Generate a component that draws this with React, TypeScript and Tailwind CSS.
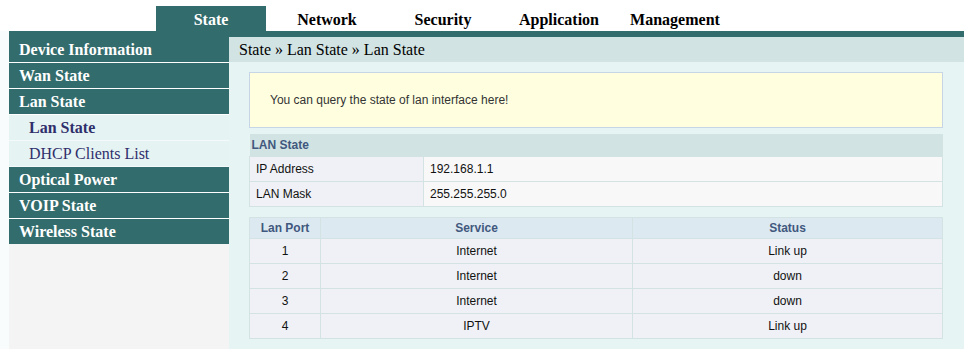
const tabs = ['State', 'Network', 'Security', 'Application', 'Management'];

const ports = [
  { port: '1', service: 'Internet', status: 'Link up' },
  { port: '2', service: 'Internet', status: 'down' },
  { port: '3', service: 'Internet', status: 'down' },
  { port: '4', service: 'IPTV', status: 'Link up' },
];

const SideMain = ({ label }: { label: string }) => (
  <div className="h-[26px] border-b border-white bg-[#336c6c] pl-[10px] text-[16px] font-bold leading-[25px] text-white">
    {label}
  </div>
);

const SideSub = ({ label, active }: { label: string; active?: boolean }) => (
  <div
    className={`h-[26px] border-b border-[#f4f9f9] bg-[#e6f3f3] pl-[20px] text-[16px] leading-[25px] text-[#2f2f6b] ${
      active ? 'font-bold' : ''
    }`}
  >
    {label}
  </div>
);

export default function App() {
  return (
    <div className="h-[349px] w-full overflow-hidden bg-[#f9fcfc] pl-[9px] font-['Liberation_Serif',serif]">
      {/* top menu */}
      <div className="flex h-[31px] gap-[6px] bg-white pl-[147px] pt-[6px] -ml-[9px] w-[calc(100%+9px)] box-border">
        <div className="ml-[9px] flex gap-[6px]">
          {tabs.map((t, i) => (
            <div
              key={t}
              className={`flex h-[25px] w-[110px] items-center justify-center pt-[2px] text-[16px] font-bold ${
                i === 0 ? 'bg-[#336c6c] text-white' : 'text-black'
              }`}
            >
              {t}
            </div>
          ))}
        </div>
      </div>
      <div className="h-[6px] bg-[#336c6c]" />

      <div className="flex h-[312px]">
        {/* sidebar */}
        <div className="w-[220px] bg-[#f5f4f4]">
          <SideMain label="Device Information" />
          <SideMain label="Wan State" />
          <SideMain label="Lan State" />
          <SideSub label="Lan State" active />
          <SideSub label="DHCP Clients List" />
          <SideMain label="Optical Power" />
          <SideMain label="VOIP State" />
          <div className="h-[25px] bg-[#336c6c] pl-[10px] text-[16px] font-bold leading-[25px] text-white">
            Wireless State
          </div>
        </div>

        {/* main */}
        <div className="flex-1 bg-[#e6f4f4]">
          <div className="h-[25px] bg-[#d1e3e3] pl-[10px] text-[16px] leading-[25px] text-black">
            State » Lan State » Lan State
          </div>
          <div className="pl-[20px] pr-[21px] pt-[10px] font-['Liberation_Sans',Arial,sans-serif] text-[12px]">
            <div className="flex h-[56px] items-center border border-[#c6d6e6] bg-[#ffffe0] pl-[20px] text-[#333]">
              You can query the state of lan interface here!
            </div>

            <table className="mt-[6px] w-full border-collapse">
              <thead>
                <tr className="h-[22px] bg-[#d1e3e3]">
                  <th colSpan={2} className="pl-[2px] text-left font-bold text-[#41587e]">
                    LAN State
                  </th>
                </tr>
              </thead>
              <tbody>
                <tr className="h-[25px]">
                  <td className="w-[174px] border border-[#d3e3e3] bg-[#eff1f6] pl-[6px] text-[#111]">IP Address</td>
                  <td className="border border-[#d3e3e3] bg-[#f8f8f8] pl-[6px] text-[#111]">192.168.1.1</td>
                </tr>
                <tr className="h-[25px]">
                  <td className="border border-[#d3e3e3] bg-[#eff1f6] pl-[6px] text-[#111]">LAN Mask</td>
                  <td className="border border-[#d3e3e3] bg-[#f8f8f8] pl-[6px] text-[#111]">255.255.255.0</td>
                </tr>
              </tbody>
            </table>

            <table className="mt-[10px] w-full border-collapse text-center">
              <thead>
                <tr className="h-[21px] bg-[#dde9f1]">
                  <th className="w-[71px] border border-[#d3e3e3] font-bold text-[#41587e]">Lan Port</th>
                  <th className="w-[312px] border border-[#d3e3e3] font-bold text-[#41587e]">Service</th>
                  <th className="border border-[#d3e3e3] font-bold text-[#41587e]">Status</th>
                </tr>
              </thead>
              <tbody>
                {ports.map((p) => (
                  <tr key={p.port} className="h-[25px] bg-[#eff1f6] text-[#111]">
                    <td className="border border-[#d3e3e3]">{p.port}</td>
                    <td className="border border-[#d3e3e3]">{p.service}</td>
                    <td className="border border-[#d3e3e3]">{p.status}</td>
                  </tr>
                ))}
              </tbody>
            </table>
          </div>
        </div>
      </div>
    </div>
  );
}
